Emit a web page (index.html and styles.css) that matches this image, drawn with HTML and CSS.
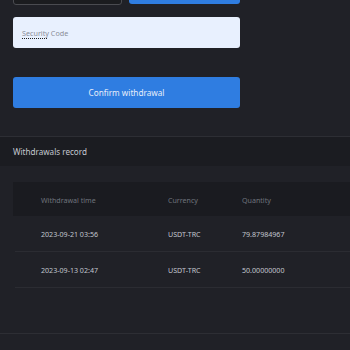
FILE: index.html
```html
<!DOCTYPE html>
<html>
<head>
<meta charset="utf-8">
<link rel="stylesheet" href="styles.css">
</head>
<body>
<div class="page">
  <div class="form">
    <div class="top-row">
      <div class="code-input"></div>
      <div class="send-btn"></div>
    </div>
    <div class="security">
      <span class="ph"><span class="spell">Security</span> Code</span>
    </div>
    <div class="confirm">Confirm withdrawal</div>
  </div>
  <div class="record-head">Withdrawals record</div>
  <div class="record-body">
    <div class="table">
      <div class="row head">
        <span class="c1">Withdrawal time</span>
        <span class="c2">Currency</span>
        <span class="c3">Quantity</span>
      </div>
      <div class="row">
        <span class="c1">2023-09-21 03:56</span>
        <span class="c2">USDT-TRC</span>
        <span class="c3">79.87984967</span>
      </div>
      <div class="row">
        <span class="c1">2023-09-13 02:47</span>
        <span class="c2">USDT-TRC</span>
        <span class="c3">50.00000000</span>
      </div>
    </div>
  </div>
</div>
</body>
</html>
```
FILE: styles.css
```css
html, body {
  margin: 0;
  padding: 0;
  background: #202127;
  width: 350px;
  height: 350px;
  overflow: hidden;
  font-family: "Noto Sans", "Open Sans", sans-serif;
}
.page {
  display: flex;
  flex-direction: column;
}
.form {
  padding: 0 110px 0 13px;
  height: 137px;
  border-bottom: 1px solid #2d2e34;
  box-sizing: border-box;
}
.top-row {
  display: flex;
  gap: 7px;
  margin-top: -25px;
  height: 30px;
}
.code-input {
  width: 109px;
  box-sizing: border-box;
  border: 1px solid #4a4b50;
  border-radius: 3px;
  background: #1b1c1f;
}
.send-btn {
  flex: 1;
  height: 29px;
  background: #2f7de1;
  border-radius: 3px;
}
.security {
  margin-top: 12px;
  height: 31px;
  background: #e8f0fe;
  border-radius: 3px;
  display: flex;
  align-items: center;
  padding-left: 9px;
  box-sizing: border-box;
}
.ph {
  font-size: 7.2px;
  color: #8a8e98;
  margin-top: 1px;
}
.spell {
  text-decoration: underline dotted #222;
  text-decoration-thickness: 1px;
  text-underline-offset: 2px;
}
.confirm {
  margin-top: 29px;
  height: 31px;
  background: #2f7de1;
  border-radius: 3px;
  display: flex;
  align-items: center;
  justify-content: center;
  color: #e8eefa;
  font-size: 8.2px;
}
.record-head {
  height: 29px;
  background: #1b1c21;
  color: #c4c8d0;
  font-size: 8.1px;
  padding-left: 13px;
  display: flex;
  align-items: center;
}
.record-body {
  padding: 16px 0 45px 13px;
  border-bottom: 1px solid #2d2e34;
}
.table {
  display: flex;
  flex-direction: column;
}
.row {
  display: grid;
  grid-template-columns: 127px 74px 1fr;
  align-items: center;
  height: 35px;
  font-size: 7.1px;
  color: #c2c6ce;
  border-bottom: 1px solid #2b2c32;
  margin-left: 2px;
  padding-left: 26px;
}
.row.head {
  height: 34px;
  background: #1a1b20;
  color: #6f737c;
  border-bottom: none;
  margin-left: 0;
  padding-left: 28px;
  padding-top: 2px;
  box-sizing: border-box;
}
```
